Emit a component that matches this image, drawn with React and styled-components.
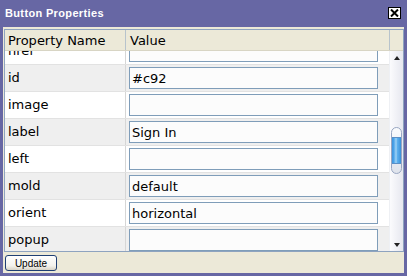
import React from 'react';
import styled, { createGlobalStyle } from 'styled-components';

const Global = createGlobalStyle`
  html, body { margin: 0; padding: 0; background: #fff; }
  * { box-sizing: border-box; }
`;

const Window = styled.div`
  width: 407px;
  height: 276px;
  background: #6767a4;
  display: flex;
  flex-direction: column;
  padding: 0 3px 3px 3px;
`;

const TitleBar = styled.div`
  height: 27px;
  flex: none;
  display: flex;
  align-items: center;
  justify-content: space-between;
  padding: 0 3px 1px 2px;
`;

const Title = styled.span`
  font-family: "Liberation Sans", Arial, sans-serif;
  font-weight: bold;
  font-size: 11px;
  letter-spacing: 0.35px;
  color: #fff;
`;

const CloseBox = styled.div`
  width: 13px;
  height: 12px;
  background: #fff;
  border: 1px solid #000;
  display: flex;
  align-items: center;
  justify-content: center;
`;

const Body = styled.div`
  flex: 1;
  background: #ece9d8;
  display: flex;
  flex-direction: column;
  padding: 2px 0 0 1px;
`;

const Grid = styled.div`
  height: 223px;
  flex: none;
  border: 1px solid #8ea3bf;
  display: flex;
  flex-direction: column;
  background: #fff;
`;

const Header = styled.div`
  height: 21px;
  flex: none;
  display: flex;
  background: #ece9d8;
  border-bottom: 1px solid #d8d5c4;
  font-family: "DejaVu Sans", Verdana, sans-serif;
  font-size: 13px;
  color: #000;
`;

const HeadCell = styled.div`
  width: ${p => (p.$w ? `${p.$w}px` : 'auto')};
  flex: ${p => (p.$w ? 'none' : '1')};
  display: flex;
  align-items: center;
  padding-left: ${p => p.$pad || 0}px;
  border-right: ${p => (p.$line ? '1px solid #b7c3cc' : 'none')};
`;

const Viewport = styled.div`
  flex: 1;
  display: flex;
  min-height: 0;
`;

const RowsClip = styled.div`
  flex: 1;
  overflow: hidden;
`;

const RowList = styled.div`
  margin-top: -13px;
`;

const Row = styled.div`
  height: 27px;
  display: flex;
  border-bottom: 1px solid #e2e2e2;
  background: ${p => (p.$alt ? '#efefef' : '#ffffff')};
  font-family: "DejaVu Sans", Verdana, sans-serif;
  font-size: 13px;
  color: #000;
`;

const NameCell = styled.div`
  width: 121px;
  flex: none;
  border-right: 1px solid #d6d6d6;
  display: flex;
  align-items: center;
  padding-left: 3px;
  padding-bottom: 1px;
`;

const ValueCell = styled.div`
  flex: 1;
  padding: 2px 0 0 3px;
`;

const TextBox = styled.input`
  display: block;
  width: 249px;
  height: 22px;
  border: 1px solid #7f9db9;
  background: #fcfcfc;
  font-family: "DejaVu Sans", Verdana, sans-serif;
  font-size: 13px;
  color: #000;
  padding: 0 0 0 2px;
  margin: 0;
  outline: none;
`;

const ScrollBar = styled.div`
  width: 14px;
  flex: none;
  display: flex;
  flex-direction: column;
  background: linear-gradient(to right, #fbfbfd, #e6e7ef);
  border-left: 1px solid #eef0f4;
`;

const ArrowBtn = styled.div`
  height: 13px;
  flex: none;
  display: flex;
  align-items: center;
  justify-content: center;
  &::after {
    content: '';
    width: 0;
    height: 0;
    border-left: 3px solid transparent;
    border-right: 3px solid transparent;
    ${p => (p.$down ? 'border-top: 4px solid #222;' : 'border-bottom: 4px solid #222;')}
  }
`;

const Track = styled.div`
  flex: 1;
  display: flex;
  flex-direction: column;
  align-items: center;
`;

const Thumb = styled.div`
  width: 11px;
  height: 47px;
  flex: none;
  border: 1px solid #98a6c2;
  border-radius: 6px;
  background: linear-gradient(to bottom, #fafbfd, #dfe3ec);
  display: flex;
  flex-direction: column;
  justify-content: center;
  padding: 0;
  overflow: hidden;
`;

const ThumbCore = styled.div`
  height: 27px;
  border-top: 1px solid #5b8fc6;
  border-bottom: 1px solid #5b8fc6;
  background: linear-gradient(to right, #3f94dc 0, #4aa3ea 20%, #9fd3f6 45%, #5cb0ee 60%, #3a8fd8 100%);
`;

const Footer = styled.div`
  flex: 1;
  display: flex;
  align-items: center;
  padding: 1px 0 0 1px;
`;

const Button = styled.button`
  width: 52px;
  height: 16px;
  border: 1px solid #1f3f73;
  border-radius: 3px;
  background: linear-gradient(to bottom, #ffffff, #f3f2ec 70%, #d8d3c6);
  font-family: "Liberation Sans", Arial, sans-serif;
  font-size: 10px;
  color: #000;
  padding: 0;
  line-height: 13px;
`;

const rows = [
  { name: 'href', value: '' },
  { name: 'id', value: '#c92' },
  { name: 'image', value: '' },
  { name: 'label', value: 'Sign In' },
  { name: 'left', value: '' },
  { name: 'mold', value: 'default' },
  { name: 'orient', value: 'horizontal' },
  { name: 'popup', value: '' },
];

export default function App() {
  return (
    <>
      <Global />
      <Window>
        <TitleBar>
          <Title>Button Properties</Title>
          <CloseBox>
            <svg width="9" height="8" viewBox="0 0 9 8">
              <path d="M1 0.5 L8 7.5 M8 0.5 L1 7.5" stroke="#000" strokeWidth="2" />
            </svg>
          </CloseBox>
        </TitleBar>
        <Body>
          <Grid>
            <Header>
              <HeadCell $w={121} $pad={3} $line>Property Name</HeadCell>
              <HeadCell $pad={4} $line>Value</HeadCell>
              <HeadCell $w={13} />
            </Header>
            <Viewport>
              <RowsClip>
                <RowList>
                  {rows.map((r, i) => (
                    <Row key={r.name} $alt={i % 2 === 1}>
                      <NameCell>{r.name}</NameCell>
                      <ValueCell>
                        <TextBox defaultValue={r.value} />
                      </ValueCell>
                    </Row>
                  ))}
                </RowList>
              </RowsClip>
              <ScrollBar>
                <ArrowBtn />
                <Track>
                  <div style={{ height: 63, flex: 'none' }} />
                  <Thumb>
                    <ThumbCore />
                  </Thumb>
                </Track>
                <ArrowBtn $down />
              </ScrollBar>
            </Viewport>
          </Grid>
          <Footer>
            <Button>Update</Button>
          </Footer>
        </Body>
      </Window>
    </>
  );
}
